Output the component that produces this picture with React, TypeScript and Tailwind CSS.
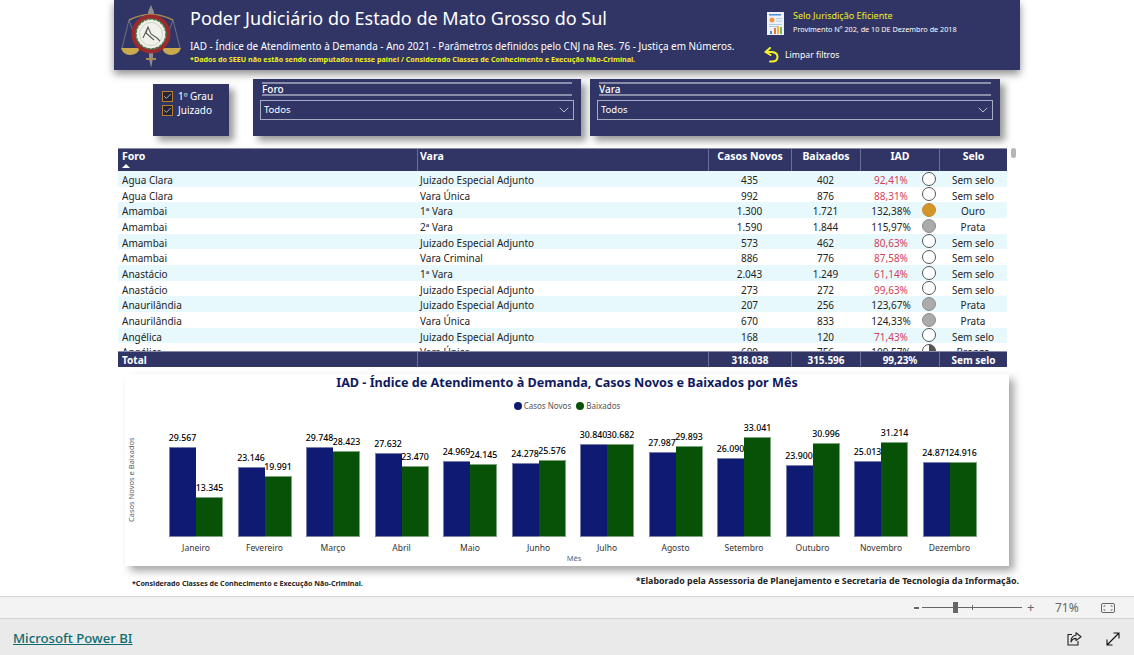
import React from 'react';
import { ChevronDown, Check } from 'lucide-react';

type Row = { foro: string; vara: string; novos: string; baixados: string; iad: string; low: boolean; selo: string };

const rows: Row[] = [
  { foro: 'Agua Clara', vara: 'Juizado Especial Adjunto', novos: '435', baixados: '402', iad: '92,41%', low: true, selo: 'Sem selo' },
  { foro: 'Agua Clara', vara: 'Vara Única', novos: '992', baixados: '876', iad: '88,31%', low: true, selo: 'Sem selo' },
  { foro: 'Amambai', vara: '1ª Vara', novos: '1.300', baixados: '1.721', iad: '132,38%', low: false, selo: 'Ouro' },
  { foro: 'Amambai', vara: '2ª Vara', novos: '1.590', baixados: '1.844', iad: '115,97%', low: false, selo: 'Prata' },
  { foro: 'Amambai', vara: 'Juizado Especial Adjunto', novos: '573', baixados: '462', iad: '80,63%', low: true, selo: 'Sem selo' },
  { foro: 'Amambai', vara: 'Vara Criminal', novos: '886', baixados: '776', iad: '87,58%', low: true, selo: 'Sem selo' },
  { foro: 'Anastácio', vara: '1ª Vara', novos: '2.043', baixados: '1.249', iad: '61,14%', low: true, selo: 'Sem selo' },
  { foro: 'Anastácio', vara: 'Juizado Especial Adjunto', novos: '273', baixados: '272', iad: '99,63%', low: true, selo: 'Sem selo' },
  { foro: 'Anaurilândia', vara: 'Juizado Especial Adjunto', novos: '207', baixados: '256', iad: '123,67%', low: false, selo: 'Prata' },
  { foro: 'Anaurilândia', vara: 'Vara Única', novos: '670', baixados: '833', iad: '124,33%', low: false, selo: 'Prata' },
  { foro: 'Angélica', vara: 'Juizado Especial Adjunto', novos: '168', baixados: '120', iad: '71,43%', low: true, selo: 'Sem selo' },
  { foro: 'Angélica', vara: 'Vara Única', novos: '690', baixados: '756', iad: '109,57%', low: false, selo: 'Bronze' },
];

const months = [
  { name: 'Janeiro', novos: 29567, baixados: 13345 },
  { name: 'Fevereiro', novos: 23146, baixados: 19991 },
  { name: 'Março', novos: 29748, baixados: 28423 },
  { name: 'Abril', novos: 27632, baixados: 23470 },
  { name: 'Maio', novos: 24969, baixados: 24145 },
  { name: 'Junho', novos: 24278, baixados: 25576 },
  { name: 'Julho', novos: 30840, baixados: 30682 },
  { name: 'Agosto', novos: 27987, baixados: 29893 },
  { name: 'Setembro', novos: 26090, baixados: 33041 },
  { name: 'Outubro', novos: 23900, baixados: 30996 },
  { name: 'Novembro', novos: 25013, baixados: 31214 },
  { name: 'Dezembro', novos: 24871, baixados: 24916 },
];

const fmt = (n: number) => n.toLocaleString('pt-BR');

const Logo = () => (
  <svg width="60" height="68" viewBox="0 0 60 68">
    <path d="M30 3 L33 10 L32 56 L30 66 L28 56 L27 10 Z" fill="#8f8f8f" />
    <path d="M8 18 Q30 7 52 18" fill="none" stroke="#a78a55" strokeWidth="1.5" />
    <path d="M8 18 L1 46 M8 18 L18 46 M52 18 L42 46 M52 18 L59 46" stroke="#8b8b8b" strokeWidth="0.7" />
    <path d="M0 46 H19 Q17 53 9 53 Q2 53 0 46 Z" fill="#c9a94c" />
    <path d="M41 46 H60 Q58 53 50 53 Q43 53 41 46 Z" fill="#c9a94c" />
    <rect x="25" y="56" width="10" height="2" fill="#a78a55" />
    <circle cx="30" cy="32" r="19.5" fill="#9c2a2c" />
    <circle cx="30" cy="32" r="15" fill="#f1f1ea" stroke="#3f7d4c" strokeWidth="1.6" strokeDasharray="3 1" />
    <circle cx="30" cy="32" r="11.5" fill="none" stroke="#b9c7b4" strokeWidth="0.7" />
    <path d="M22 36 L27 25 L30 32 L36 36 L39 39 M27 25 L25 31 L33 38" fill="none" stroke="#5a5a5a" strokeWidth="1.1" />
  </svg>
);

const ReportIcon = () => (
  <svg width="17" height="23" viewBox="0 0 17 23">
    <rect width="17" height="23" fill="#eef2f8" />
    <rect x="2" y="2" width="12" height="1.5" fill="#4a8fd0" />
    <circle cx="5" cy="8" r="2.5" fill="#ef9a3a" />
    <path d="M9 6.5h6M9 9h6M2 12.5h13M2 14.5h9" stroke="#a9cbe6" strokeWidth="1" />
    <rect x="3" y="19" width="2" height="3" fill="#4a8fd0" />
    <rect x="7" y="16" width="2" height="6" fill="#e8743b" />
    <rect x="10" y="14" width="2" height="8" fill="#f2b63c" />
    <rect x="13" y="15" width="2" height="7" fill="#7cb95c" />
  </svg>
);

const UndoIcon = () => (
  <svg width="15" height="16" viewBox="0 0 15 16" fill="none" stroke="#f5f02a" strokeWidth="2" strokeLinecap="round" strokeLinejoin="round">
    <path d="M6 1 L1.5 5 L6.5 8" />
    <path d="M2 5 H8 Q13.5 5.5 13.5 10 Q13.5 14.5 8 14.5 H6" />
  </svg>
);

const ShareIcon = () => (
  <svg width="15" height="14" viewBox="0 0 15 14" fill="none" stroke="#222" strokeWidth="1.1">
    <path d="M5 2.5 H1 V13 H11 V9" />
    <path d="M9 .8 L14 4.8 L9 8.6 V6.4 Q5.5 6.4 4 10 Q4 3.6 9 3.2 Z" strokeLinejoin="round" />
  </svg>
);

const ExpandIcon = () => (
  <svg width="14" height="14" viewBox="0 0 14 14" fill="none" stroke="#111" strokeWidth="1.1">
    <path d="M1 13 L13 1 M7.5 1 H13 V6.5 M1 7.5 V13 H6.5" />
  </svg>
);

const FitIcon = () => (
  <svg width="14" height="10" viewBox="0 0 14 10" fill="none" stroke="#666" strokeWidth="1">
    <rect x=".5" y=".5" width="13" height="9" rx="1.5" />
    <path d="M3 4 V2.8 H4.5 M11 4 V2.8 H9.5 M3 6 V7.2 H4.5 M11 6 V7.2 H9.5" strokeWidth="0.8" />
  </svg>
);

const SeloDot = ({ selo }: { selo: string }) => {
  if (selo === 'Ouro') return <span className="w-[14px] h-[14px] rounded-full bg-[#d3942c] border border-[#c98a25] shrink-0" />;
  if (selo === 'Prata') return <span className="w-[14px] h-[14px] rounded-full bg-[#ababab] border border-[#8c8c8c] shrink-0" />;
  if (selo === 'Bronze')
    return (
      <svg width="14" height="14" viewBox="0 0 14 14" className="shrink-0">
        <circle cx="7" cy="7" r="6.5" fill="#fff" stroke="#555" />
        <path d="M7 7 V.5 A6.5 6.5 0 0 1 13.5 7 Z" fill="#555" />
      </svg>
    );
  return <span className="w-[14px] h-[14px] rounded-full bg-white border border-[#555] shrink-0" />;
};

const Slicer = ({ label, className }: { label: string; className: string }) => (
  <div className={`bg-[#303566] h-[57px] px-[7px] pt-[3px] shadow-[5px_5px_7px_rgba(0,0,0,0.4)] ${className}`}>
    <div className="mx-[2px] border-y-2 border-[#8b8eab] h-[14px] flex items-center text-white text-[10px] font-medium leading-none">{label}</div>
    <div className="mt-[4px] h-[20px] border border-[#a9abc3] flex items-center justify-between pl-[3px] pr-px text-white text-[9.5px]">
      <span>Todos</span>
      <ChevronDown size={16} strokeWidth={1} color="#fff" />
    </div>
  </div>
);

const Grau = ({ label }: { label: string }) => (
  <div className="flex items-center gap-[5px] h-[14px]">
    <span className="w-[11px] h-[11px] border border-[#b8802c] bg-[#23233a] flex items-center justify-center">
      <Check size={9} strokeWidth={2} color="#dcdcdc" />
    </span>
    <span className="text-white text-[10px] leading-none">{label}</span>
  </div>
);

const COLS = 'grid grid-cols-[299px_291px_83px_69px_79px_68px]';

export default function App() {
  return (
    <div className="w-[1134px] h-[655px] overflow-hidden bg-white flex flex-col font-['Noto_Sans',sans-serif]">
      <div className="h-[596px] pl-[114px] relative">
        {/* cabecalho */}
        <header className="w-[906px] h-[70px] bg-[#303566] flex shadow-[0_4px_8px_rgba(0,0,0,0.45)]">
          <div className="w-[76px] pl-[7px] pt-[2px]">
            <Logo />
          </div>
          <div className="w-[574px] pt-[6px]">
            <h1 className="text-white text-[18px] leading-[24px] whitespace-nowrap">Poder Judiciário do Estado de Mato Grosso do Sul</h1>
            <p className="mt-[10px] text-white text-[9.93px] leading-[13px] whitespace-nowrap">IAD - Índice de Atendimento à Demanda - Ano 2021 - Parâmetros definidos pelo CNJ na Res. 76 - Justiça em Números.</p>
            <p className="mt-[1px] text-[#f0f020] text-[7.18px] leading-[10px] font-bold whitespace-nowrap">*Dados do SEEU não estão sendo computados nesse painel / Considerado Classes de Conhecimento e Execução Não-Criminal.</p>
          </div>
          <div className="pl-[3px] pt-[12px]">
            <div className="flex gap-[9px]">
              <ReportIcon />
              <div>
                <div className="text-[#f0f020] text-[9px] leading-[12px] mt-[-2px] whitespace-nowrap">Selo Jurisdição Eficiente</div>
                <div className="text-white text-[7.25px] leading-[10px] mt-[2px] whitespace-nowrap">Provimento Nº 202, de 10 DE Dezembro de 2018</div>
              </div>
            </div>
            <div className="flex items-center gap-[6px] mt-[12px] ml-[-3px]">
              <UndoIcon />
              <span className="text-white text-[8.7px] leading-none">Limpar filtros</span>
            </div>
          </div>
        </header>

        {/* filtros */}
        <div className="flex items-start mt-[9px] pl-[39px]">
          <div className="w-[76px] h-[52px] mt-[5px] bg-[#303566] pl-[9px] pt-[5px] shadow-[5px_5px_7px_rgba(0,0,0,0.4)]">
            <Grau label="1º Grau" />
            <Grau label="Juizado" />
          </div>
          <Slicer label="Foro" className="w-[328px] ml-[24px]" />
          <Slicer label="Vara" className="w-[410px] ml-[9px]" />
        </div>

        {/* tabela */}
        <div className="mt-[12px] ml-[4px] w-[889px] h-[219px] flex flex-col text-[10px] text-[#252423]">
          <div className={`${COLS} h-[23px] bg-[#303566] text-white font-bold text-[10.5px] border-t border-[#8b8eab] shrink-0`}>
            <div className="pl-[4px] relative">
              Foro
              <span className="absolute left-[4px] top-[15px] w-0 h-0 border-x-[4px] border-x-transparent border-b-[4px] border-b-white" />
            </div>
            <div className="pl-[2px] border-l border-[#6a6e97]">Vara</div>
            <div className="text-center border-l border-[#6a6e97]">Casos Novos</div>
            <div className="text-center border-l border-[#6a6e97]">Baixados</div>
            <div className="text-center border-l border-[#6a6e97]">IAD</div>
            <div className="text-center border-l border-[#6a6e97]">Selo</div>
          </div>
          <div className="h-[180px] overflow-hidden shrink-0">
            {rows.map((r, i) => (
              <div key={i} className={`${COLS} h-[15.67px] items-start leading-[19px] ${i % 2 === 0 ? 'bg-[#e8f9fe]' : 'bg-white'}`}>
                <div className="pl-[4px]">{r.foro}</div>
                <div className="pl-[3px]">{r.vara}</div>
                <div className="text-center">{r.novos}</div>
                <div className="text-center">{r.baixados}</div>
                <div className="flex items-center h-[15.67px]">
                  <span className={`w-[62px] h-[15.67px] text-center ${r.low ? 'text-[#d2405a]' : ''}`}>{r.iad}</span>
                  <SeloDot selo={r.selo} />
                </div>
                <div className="text-center">{r.selo}</div>
              </div>
            ))}
          </div>
          <div className={`${COLS} h-[16px] bg-[#303566] text-white font-bold text-[10px] leading-[16px] overflow-hidden border-t border-[#8b8eab] shrink-0`}>
            <div className="pl-[4px]">Total</div>
            <div className="border-l border-[#6a6e97]" />
            <div className="text-center border-l border-[#6a6e97]">318.038</div>
            <div className="text-center border-l border-[#6a6e97]">315.596</div>
            <div className="text-center border-l border-[#6a6e97]">99,23%</div>
            <div className="text-center border-l border-[#6a6e97]">Sem selo</div>
          </div>
        </div>
        <div className="absolute left-[1011px] top-[148px] w-[5px] h-[10px] rounded-full bg-[#b5b5b5]" />

        {/* grafico */}
        <section className="mt-[7px] ml-[11px] w-[884px] h-[192px] bg-white shadow-[5px_5px_8px_rgba(0,0,0,0.35)] relative flex flex-col">
          <h2 className="text-center text-[#0f1a5e] text-[12.6px] leading-[18px] font-bold">IAD - Índice de Atendimento à Demanda, Casos Novos e Baixados por Mês</h2>
          <div className="flex justify-center items-center gap-[2px] mt-[9px] text-[8px] leading-[10px] text-[#555]">
            <span className="w-[8px] h-[8px] rounded-full bg-[#0f1a73]" />
            <span>Casos Novos</span>
            <span className="w-[8px] h-[8px] rounded-full bg-[#085208] ml-[3px]" />
            <span>Baixados</span>
          </div>
          <span className="absolute left-[1px] top-[64px] h-[84px] [writing-mode:vertical-rl] rotate-180 text-center text-[7.5px] text-[#605e5c] whitespace-nowrap">Casos Novos e Baixados</span>
          <div className="flex items-end h-[124px] mt-[2px] pl-[44px] shrink-0">
            {months.map((m) => (
              <div key={m.name} className="w-[68.5px] shrink-0 flex flex-col">
                <div className="flex items-end">
                  {[m.novos, m.baixados].map((v, i) => (
                    <div key={i} className="w-[27px] flex flex-col items-center">
                      <span className="text-[8.8px] leading-[17px] font-medium text-black whitespace-nowrap">{fmt(v)}</span>
                      <div
                        className={i === 0 ? 'w-[27px] bg-[#0f1a73] border border-[#7c80ac] border-r-0' : 'w-[27px] bg-[#085208] border border-[#7ea57e] border-l-0'}
                        style={{ height: v * 0.00303 }}
                      />
                    </div>
                  ))}
                </div>
              </div>
            ))}
          </div>
          <div className="flex pl-[44px] mt-[5px]">
            {months.map((m) => (
              <div key={m.name} className="w-[68.5px] shrink-0">
                <div className="w-[54px] text-center text-[8.5px] leading-[12px] text-[#333] whitespace-nowrap">{m.name}</div>
              </div>
            ))}
          </div>
          <div className="text-center text-[7.5px] leading-[9px] text-[#4a6a80] ml-[14px]">Mês</div>
        </section>

        {/* notas */}
        <div className="flex justify-between items-center w-[905px] mt-[8px] pl-[18px] h-[16px]">
          <span className="text-[7.1px] font-bold text-[#252423] pt-[2px]">*Considerado Classes de Conhecimento e Execução Não-Criminal.</span>
          <span className="text-[8.87px] font-bold text-[#252423]">*Elaborado pela Assessoria de Planejamento e Secretaria de Tecnologia da Informação.</span>
        </div>
      </div>

      {/* barra de zoom */}
      <div className="h-[23px] bg-[#f3f3f3] border-y border-[#d4d4d4] flex items-center justify-end shrink-0 text-[#666]">
        <span className="w-[5px] h-[2px] bg-[#666] mr-[3px]" />
        <div className="w-[100px] h-px bg-[#666] relative">
          <span className="absolute left-[31px] top-[-5px] w-[5px] h-[11px] bg-[#666]" />
          <span className="absolute left-[50px] top-[-2px] w-px h-[5px] bg-[#666]" />
        </div>
        <span className="ml-[5px] text-[13px] leading-none w-[10px]">+</span>
        <span className="ml-[18px] text-[12px] leading-none w-[24px]">71%</span>
        <span className="ml-[22px] mr-[19px] flex">
          <FitIcon />
        </span>
      </div>

      {/* rodape */}
      <footer className="flex-1 bg-[#eaeaea] flex items-center pl-[13px] pr-[14px] pt-[4px]">
        <a className="text-[#0f6b6e] underline text-[13.2px] font-medium">Microsoft Power BI</a>
        <div className="ml-auto flex items-center gap-[24px]">
          <ShareIcon />
          <ExpandIcon />
        </div>
      </footer>
    </div>
  );
}
